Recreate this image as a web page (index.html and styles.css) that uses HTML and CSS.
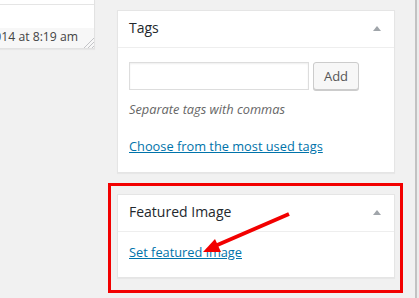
FILE: index.html
```html
<!DOCTYPE html>
<html lang="en">
<head>
    <meta charset="UTF-8">
    <meta name="viewport" content="width=device-width, initial-scale=1.0">
    <title>Edit Post</title>
    <link rel="stylesheet" href="styles.css">
</head>
<body>

    <div class="screen">
        <!-- Editor (cut off on the left) -->
        <div class="left-col">
            <div class="editor">
                <div class="editor-top"></div>
                <div class="editor-area"></div>
                <div class="status-bar">
                    <span class="status-text">Last edited by admin on March 12, 2014 at 8:19 am</span>
                    <span class="resize-handle">
                        <svg width="11" height="11" viewBox="0 0 11 11">
                            <path d="M11 1 L1 11 M11 5 L5 11 M11 9 L9 11" stroke="#c3c4c7" stroke-width="1" fill="none"/>
                        </svg>
                    </span>
                </div>
            </div>
        </div>

        <!-- Sidebar -->
        <div class="sidebar">
            <div class="postbox">
                <div class="postbox-header">
                    <h2 class="hndle">Tags</h2>
                    <span class="toggle"></span>
                </div>
                <div class="inside tags-inside">
                    <div class="tag-row">
                        <input type="text" class="tag-input">
                        <button class="button">Add</button>
                    </div>
                    <p class="howto">Separate tags with commas</p>
                    <p class="cloud-link"><a href="#">Choose from the most used tags</a></p>
                </div>
            </div>

            <div class="postbox featured">
                <div class="postbox-header">
                    <h2 class="hndle">Featured Image</h2>
                    <span class="toggle"></span>
                </div>
                <div class="inside featured-inside">
                    <a href="#">Set featured image</a>
                </div>
            </div>

            <div class="highlight"></div>
        </div>

        <div class="edge"></div>

        <!-- annotation arrow -->
        <svg class="arrow" width="419" height="298" viewBox="0 0 419 298">
            <line x1="289" y1="214" x2="215" y2="246" stroke="#f20000" stroke-width="4"/>
            <polygon points="203,252 215,239 221,252" fill="#f20000"/>
        </svg>
    </div>

</body>
</html>
```

FILE: styles.css
```css
body {
    margin: 0;
    padding: 0;
    background-color: #f1f1f1;
    font-family: "Open Sans", Arial, sans-serif;
    font-size: 13px;
    color: #444;
}

.screen {
    position: relative;
    display: flex;
    width: 419px;
    height: 298px;
    overflow: hidden;
}

/* Editor */
.left-col {
    width: 95px;
    flex-shrink: 0;
}

.editor {
    background-color: #fff;
    border-right: 1px solid #e2e2e2;
    border-bottom: 1px solid #e2e2e2;
    box-shadow: 0 1px 1px rgba(0, 0, 0, 0.04);
}

.editor-top {
    height: 4px;
    border-bottom: 1px solid #e5e5e5;
}

.editor-area {
    height: 23px;
}

.status-bar {
    display: flex;
    justify-content: flex-end;
    align-items: flex-start;
    height: 20px;
    background-color: #f7f7f7;
    overflow: hidden;
    white-space: nowrap;
}

.status-text {
    font-size: 12.2px;
    line-height: 15px;
    padding-top: 1px;
    color: #444;
}

.resize-handle {
    display: flex;
    align-items: flex-end;
    justify-content: flex-end;
    width: 16px;
    height: 20px;
    flex-shrink: 0;
}

.resize-handle svg {
    display: block;
}

/* Sidebar */
.sidebar {
    position: relative;
    width: 278px;
    margin-left: 22px;
    margin-top: 10px;
    flex-shrink: 0;
}

.postbox {
    background-color: #fff;
    border: 1px solid #e5e5e5;
    box-shadow: 0 1px 1px rgba(0, 0, 0, 0.04);
}

.postbox.featured {
    margin-top: 21px;
}

.postbox-header {
    display: flex;
    justify-content: space-between;
    align-items: flex-start;
    height: 36px;
    padding: 0 13px 0 11px;
    border-bottom: 1px solid #eee;
}

.hndle {
    margin: 0;
    padding-top: 7px;
    font-size: 14px;
    font-weight: 400;
    line-height: 19.6px;
    color: #23282d;
}

.toggle {
    width: 0;
    height: 0;
    margin-top: 15px;
    border-left: 4px solid transparent;
    border-right: 4px solid transparent;
    border-bottom: 5px solid #a0a5aa;
}

.inside {
    padding: 0 11px;
    font-size: 12.8px;
    line-height: 19.5px;
}

.tags-inside {
    padding-top: 14px;
    padding-bottom: 16px;
}

.tag-row {
    display: flex;
    height: 28px;
}

.tag-input {
    box-sizing: border-box;
    width: 180px;
    height: 28px;
    margin: 0;
    border: 1px solid #ddd;
    box-shadow: inset 0 1px 2px rgba(0, 0, 0, 0.07);
    background-color: #fff;
}

.button {
    box-sizing: border-box;
    width: 46px;
    height: 28px;
    margin-left: 4px;
    padding: 0;
    background-color: #f7f7f7;
    border: 1px solid #ccc;
    border-radius: 3px;
    box-shadow: 0 1px 0 #ccc;
    font-family: "Open Sans", Arial, sans-serif;
    font-size: 13px;
    color: #555;
}

.howto {
    margin: 10px 0 0;
    font-style: italic;
    color: #666;
}

.cloud-link {
    margin: 17px 0 0;
}

a {
    color: #0073aa;
    text-decoration: underline;
}

.featured-inside {
    padding-top: 11px;
    padding-bottom: 14px;
}

/* annotations */
.highlight {
    position: absolute;
    left: -9px;
    top: 173px;
    width: 295px;
    height: 110px;
    box-sizing: border-box;
    border: 3px solid #f20000;
}

.edge {
    margin-left: auto;
    width: 2px;
    border-left: 2px solid #c2c2c2;
    background-color: #ececec;
}

.arrow {
    position: absolute;
    left: 0;
    top: 0;
    pointer-events: none;
}
```
